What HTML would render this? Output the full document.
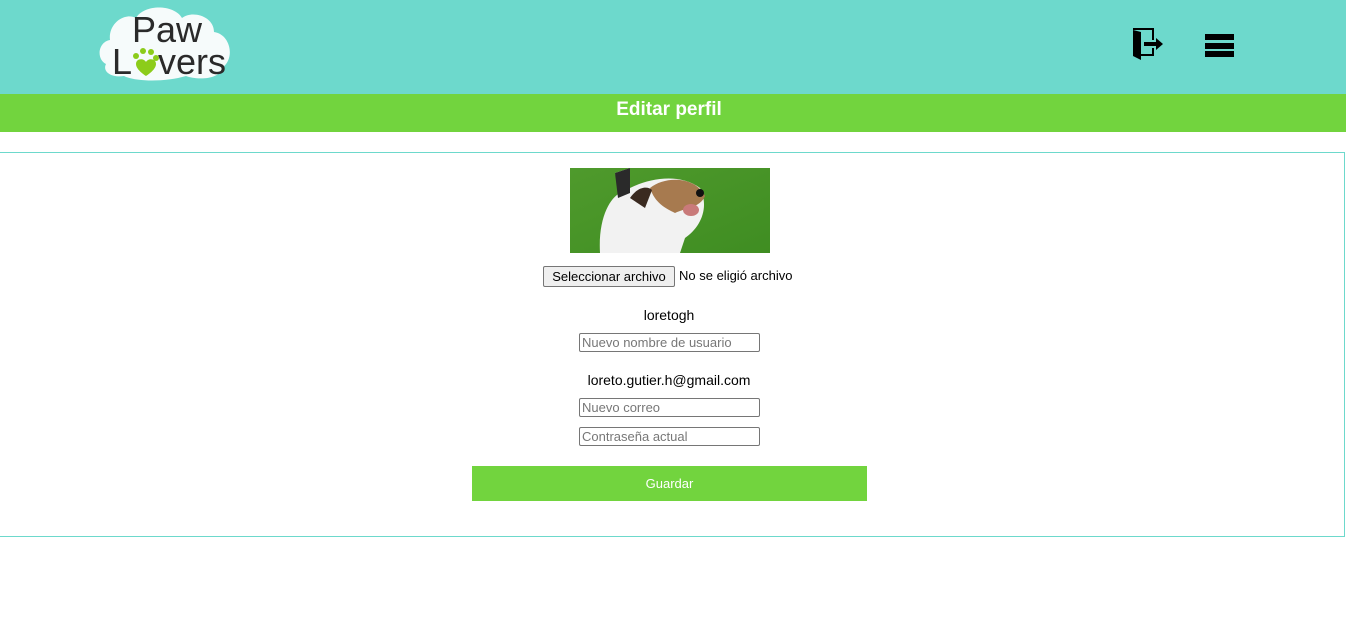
<!DOCTYPE html>
<html><head><meta charset="utf-8"><style>
body{margin:0;width:1346px;height:629px;background:#fff;font-family:"Liberation Sans",sans-serif;overflow:hidden;position:relative}
.hdr{position:absolute;left:0;top:0;width:1346px;height:94px;background:#6dd9cc}
.bar{position:absolute;left:0;top:94px;width:1338px;padding-right:8px;height:38px;background:#72d43e;color:#fff;font-weight:bold;font-size:19px;text-align:center;line-height:32px}
.box{position:absolute;left:0;top:152px;width:1344px;height:383px;border:1px solid #6dd9cc;border-left:none}
.t{position:absolute;width:1338px;text-align:center;font-size:14px;color:#000;left:0}
.in{position:absolute;left:579px;width:177px;height:17px;border:1px solid #767676;border-radius:2px;font-size:13px;color:#777;line-height:17px;padding-left:2px;box-sizing:content-box}
</style></head><body>
<div class="hdr">
<svg style="position:absolute;left:96px;top:4px" width="138" height="78" viewBox="0 0 138 78">
<path d="M10 60 C0 55 2 38 14 36 C12 20 28 8 40 14 C48 0 78 0 86 14 C96 6 118 12 118 28 C134 30 140 54 126 64 C124 76 100 76 90 72 C70 78 40 78 28 72 C16 74 6 68 10 60Z" fill="#f6fbfb"/>
<text x="36" y="38" font-family="Liberation Sans" font-size="36" fill="#2a2a2a">Paw</text>
<text x="16" y="70" font-family="Liberation Sans" font-size="36" fill="#2a2a2a">L</text>
<text x="62" y="70" font-family="Liberation Sans" font-size="36" fill="#2a2a2a">vers</text>
<g fill="#8ccc1a"><circle cx="40" cy="52" r="3"/><circle cx="47" cy="47" r="3"/><circle cx="55" cy="48" r="3"/><circle cx="60" cy="54" r="3"/><path d="M40 60 C40 54 48 54 50 58 C52 54 60 54 60 60 C60 66 50 72 50 72 C50 72 40 66 40 60Z"/></g>
</svg>
<svg style="position:absolute;left:1132px;top:28px" width="32" height="33" viewBox="0 0 32 33">
<path d="M1 1 H21 V12 M21 20 V27 H8" stroke="#000" stroke-width="2" fill="none"/><path d="M1 2 L9 4 V32 L1 28Z" fill="#000"/>
<path d="M12 14 H24 V10 L31 16 L24 22 V18 H12Z" fill="#000"/>
</svg>
<svg style="position:absolute;left:1205px;top:34px" width="29" height="24"><rect y="0" width="29" height="6" fill="#000"/><rect y="9" width="29" height="6" fill="#000"/><rect y="17" width="29" height="6" fill="#000"/></svg>
</div>
<div class="bar">Editar perfil</div>
<div class="box"></div>
<svg style="position:absolute;left:570px;top:168px" width="200" height="85" viewBox="0 0 200 85">
<defs><linearGradient id="g" x1="0" y1="0" x2="1" y2="1"><stop offset="0" stop-color="#4f9a2c"/><stop offset="1" stop-color="#3f8d22"/></linearGradient></defs>
<rect width="200" height="85" fill="url(#g)"/>
<path d="M30 85 C28 50 40 30 50 25 L45 5 L60 0 L60 20 C80 10 110 5 130 20 C140 40 130 60 115 70 L110 85Z" fill="#f2f2f2"/>
<path d="M80 20 C95 8 125 8 135 28 C130 40 115 40 105 45 C95 40 85 35 80 20Z" fill="#a77a4f"/>
<path d="M60 30 C68 18 78 18 82 22 L75 40Z" fill="#3a2a20"/>
<path d="M45 5 L60 0 L60 25 L48 30Z" fill="#2a2a2a"/>
<ellipse cx="121" cy="42" rx="8" ry="6" fill="#c97a7a"/>
<circle cx="130" cy="25" r="4" fill="#111"/>
</svg>
<div style="position:absolute;left:543px;top:266px;width:130px;height:19px;border:1px solid #767676;border-radius:2px;background:#efefef;font-size:13px;text-align:center;line-height:19px">Seleccionar archivo</div>
<div style="position:absolute;left:679px;top:268px;font-size:13px">No se eligió archivo</div>
<div class="t" style="top:307px">loretogh</div>
<div class="in" style="top:333px">Nuevo nombre de usuario</div>
<div class="t" style="top:372px">loreto.gutier.h@gmail.com</div>
<div class="in" style="top:398px">Nuevo correo</div>
<div class="in" style="top:427px">Contraseña actual</div>
<div style="position:absolute;left:472px;top:466px;width:395px;height:35px;background:#72d43e;color:#fff;font-size:13px;text-align:center;line-height:35px">Guardar</div>
</body></html>
